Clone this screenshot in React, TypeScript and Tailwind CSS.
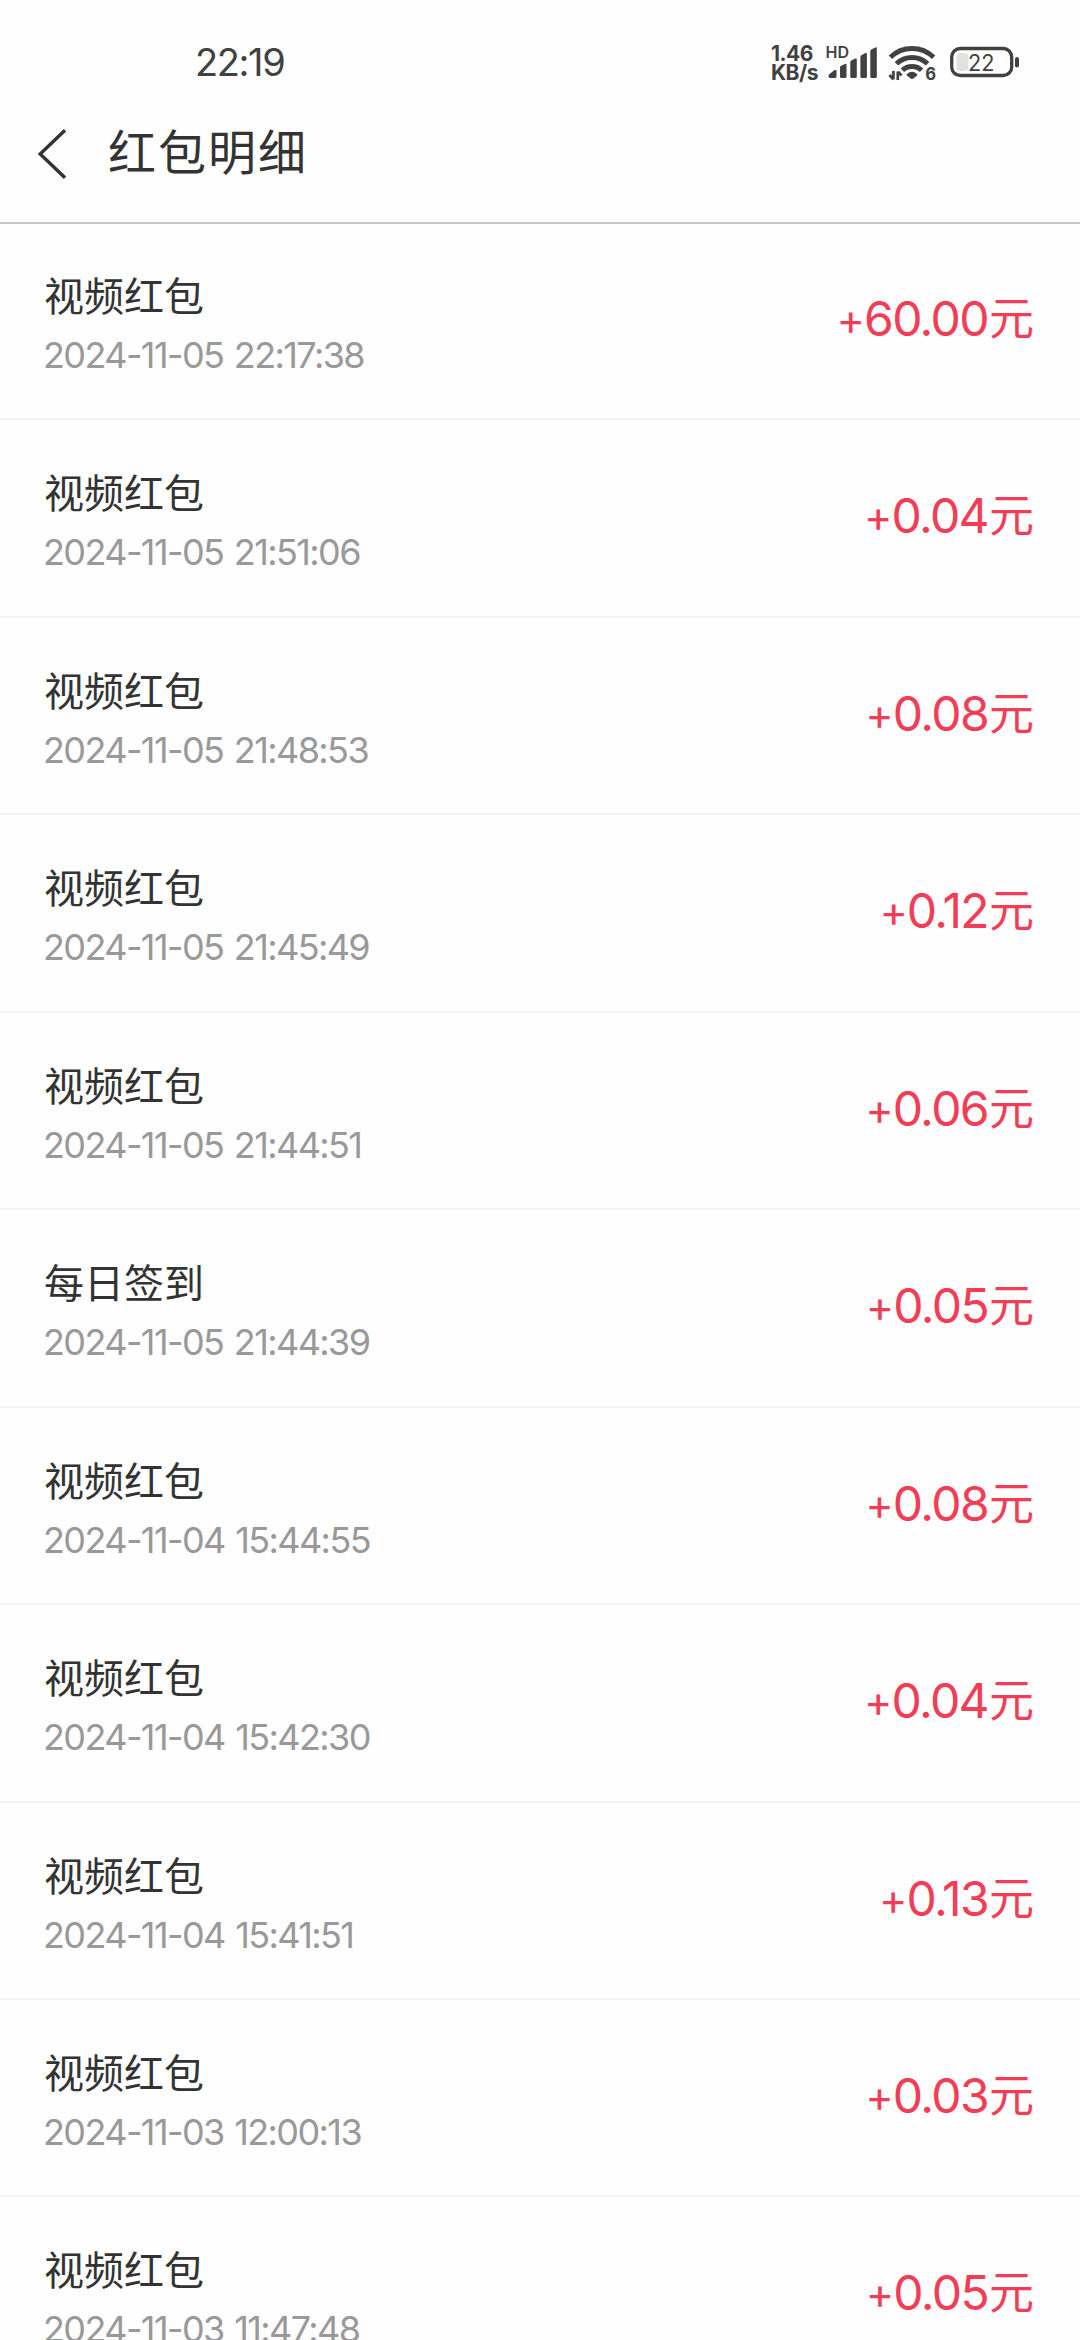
interface RedPacketRecord {
  title: string
  time: string
  amount: string
}

const records: RedPacketRecord[] = [
  { title: '视频红包', time: '2024-11-05 22:17:38', amount: '60.00' },
  { title: '视频红包', time: '2024-11-05 21:51:06', amount: '0.04' },
  { title: '视频红包', time: '2024-11-05 21:48:53', amount: '0.08' },
  { title: '视频红包', time: '2024-11-05 21:45:49', amount: '0.12' },
  { title: '视频红包', time: '2024-11-05 21:44:51', amount: '0.06' },
  { title: '每日签到', time: '2024-11-05 21:44:39', amount: '0.05' },
  { title: '视频红包', time: '2024-11-04 15:44:55', amount: '0.08' },
  { title: '视频红包', time: '2024-11-04 15:42:30', amount: '0.04' },
  { title: '视频红包', time: '2024-11-04 15:41:51', amount: '0.13' },
  { title: '视频红包', time: '2024-11-03 12:00:13', amount: '0.03' },
  { title: '视频红包', time: '2024-11-03 11:47:48', amount: '0.05' }
]

function SignalIcon() {
  return (
    <svg width="50" height="34" viewBox="0 0 50 34" fill="#414141" className="mt-[45px] overflow-visible">
      <path d="M2 29.5 7 25.5Q9.5 23.8 9.5 26V31.5Q9.5 33 8 33H3.5Q.5 33 2 29.5Z" />
      <path d="M13 22.5Q13 21.3 14 20.8L18 18.9Q19.5 18.4 19.5 20V31.5Q19.5 33 18 33H14.5Q13 33 13 31.5Z" />
      <path d="M23.3 17.2Q23.3 16 24.3 15.5L28.3 13.6Q29.8 13 29.8 14.6V31.5Q29.8 33 28.3 33H24.8Q23.3 33 23.3 31.5Z" />
      <path d="M33.4 12Q33.4 10.8 34.4 10.2L38.4 8.1Q39.9 7.5 39.9 9.1V31.5Q39.9 33 38.4 33H34.9Q33.4 33 33.4 31.5Z" />
      <path d="M43.3 6.4Q43.3 5.2 44.3 4.6L48.3 2.5Q49.8 1.9 49.8 3.5V31.5Q49.8 33 48.3 33H44.8Q43.3 33 43.3 31.5Z" />
      <text x="-1.5" y="12.8" className="font-semibold" fontSize="16">HD</text>
    </svg>
  )
}

function WifiIcon() {
  return (
    <svg width="48" height="36" viewBox="0 0 48 36" fill="none" className="mt-[45px] overflow-visible">
      <g stroke="#414141" strokeWidth="5">
        <path d="M2.4 12.2a31 31 0 0 1 43.2 0" />
        <path d="M8.4 18.7a22.5 22.5 0 0 1 31.2 0" />
        <path d="M14.4 25.2a14 14 0 0 1 19.2 0" />
      </g>
      <path d="M19 28.9Q24 24.6 29 28.9Q30 29.8 28.8 30.8L24.9 33.8Q24 34.4 23.1 33.8L19.2 30.8Q18 29.8 19 28.9Z" fill="#414141" />
      <path d="M5.4 26V34.5M1.5 30 5.2 34.3M9.8 35V26.5M13.5 30.5 10 26.7" stroke="#414141" strokeWidth="2.7" />
      <text x="37.3" y="35" fill="#414141" className="font-bold" fontSize="17.5" textLength="10.8" lengthAdjust="spacingAndGlyphs">6</text>
    </svg>
  )
}

function BatteryIcon() {
  return (
    <svg width="70" height="32" viewBox="0 0 70 32" fill="none" className="mt-[46px]">
      <rect x="1.7" y="2.5" width="60" height="27" rx="8.5" stroke="#414141" strokeWidth="3.3" />
      <rect x="6.5" y="7" width="12" height="18" rx="4" fill="#e1e1e1" />
      <rect x="65" y="11" width="4" height="10.5" rx="2" fill="#414141" />
      <text x="18" y="24.7" fill="#414141" fontSize="23" textLength="26.5" lengthAdjust="spacingAndGlyphs">22</text>
    </svg>
  )
}

function StatusBar() {
  return (
    <div className="flex h-[108px] shrink-0 items-start text-[#414141]">
      <span className="ml-[195px] mt-[39px] text-[38px] leading-[46px] tracking-[-1.4px]">22:19</span>
      <div className="ml-auto flex items-start">
        <div className="mr-2 mt-[45px] w-[48px] text-[21px] font-bold leading-[18.5px] tracking-[-0.5px]">
          <div>1.46</div>
          <div>KB/s</div>
        </div>
        <SignalIcon />
        <div className="w-[11px]" />
        <WifiIcon />
        <div className="w-[14px]" />
        <BatteryIcon />
      </div>
      <div className="w-[60px]" />
    </div>
  )
}

function Header() {
  return (
    <header className="flex h-[116px] shrink-0 items-start border-b-2 border-[#c8c8c8] text-[#333]">
      <svg width="30" height="50" viewBox="0 0 30 50" fill="none" className="ml-[37px] mt-[21px]">
        <path d="M28 1.2 3.2 24.9 28 48.8" stroke="#333" strokeWidth="3.4" />
      </svg>
      <h1 className="ml-[41px] mt-[10px] text-[48px] leading-[70px] tracking-[2px]">红包明细</h1>
    </header>
  )
}

function RecordRow({ record }: { record: RedPacketRecord }) {
  return (
    <li className="flex h-[197.44px] shrink-0 items-start justify-between border-b-2 border-[#f4f4f4] pl-[43px] pr-[46px]">
      <div className="pt-[44px]">
        <div className="pl-px text-[40px] leading-[60px] text-[#333]">{record.title}</div>
        <div className="text-[36px] leading-[56px] tracking-[-1.6px] [word-spacing:2px] text-[#999]">{record.time}</div>
      </div>
      <div className="flex pt-[60px] text-[48px] leading-[72px] text-[#f23d56]">
        <span className="text-[43px] tracking-[-1px]">+</span>
        <span className="tracking-[-1.6px]">{record.amount}</span>
        <span className="ml-px text-[45px]">元</span>
      </div>
    </li>
  )
}

function App() {
  return (
    <div className="flex h-[2340px] w-[1080px] flex-col overflow-hidden bg-[#fefefe] font-['Inter','Noto_Sans_CJK_SC',sans-serif]">
      <StatusBar />
      <Header />
      <ul className="-mt-[1px] flex flex-col">
        {records.map((record) => (
          <RecordRow key={record.time} record={record} />
        ))}
      </ul>
    </div>
  )
}

export default App
